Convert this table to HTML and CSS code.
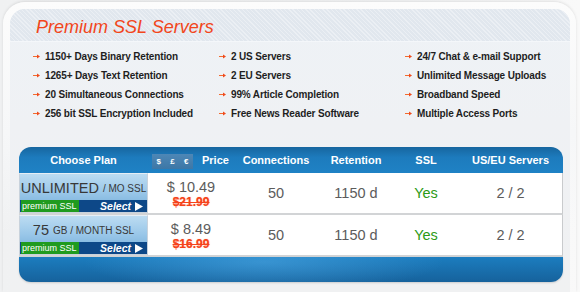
FILE: index.html
```html
<!DOCTYPE html>
<html>
<head>
<meta charset="utf-8">
<link rel="stylesheet" href="styles.css">
</head>
<body>
<div class="frame">
  <div class="panel">
    <div class="band"><h1 class="title">Premium SSL Servers</h1></div>
    <ul class="features">
      <li><span class="arr"><svg width="7" height="5" viewBox="0 0 7 5"><path d="M0 2.5H5" stroke="#f26a2e" stroke-width="1"/><path d="M4 0.5L7 2.5L4 4.5Z" fill="#f04a1c"/></svg></span>1150+ Days Binary Retention</li>
      <li><span class="arr"><svg width="7" height="5" viewBox="0 0 7 5"><path d="M0 2.5H5" stroke="#f26a2e" stroke-width="1"/><path d="M4 0.5L7 2.5L4 4.5Z" fill="#f04a1c"/></svg></span>2 US Servers</li>
      <li><span class="arr"><svg width="7" height="5" viewBox="0 0 7 5"><path d="M0 2.5H5" stroke="#f26a2e" stroke-width="1"/><path d="M4 0.5L7 2.5L4 4.5Z" fill="#f04a1c"/></svg></span>24/7 Chat &amp; e-mail Support</li>
      <li><span class="arr"><svg width="7" height="5" viewBox="0 0 7 5"><path d="M0 2.5H5" stroke="#f26a2e" stroke-width="1"/><path d="M4 0.5L7 2.5L4 4.5Z" fill="#f04a1c"/></svg></span>1265+ Days Text Retention</li>
      <li><span class="arr"><svg width="7" height="5" viewBox="0 0 7 5"><path d="M0 2.5H5" stroke="#f26a2e" stroke-width="1"/><path d="M4 0.5L7 2.5L4 4.5Z" fill="#f04a1c"/></svg></span>2 EU Servers</li>
      <li><span class="arr"><svg width="7" height="5" viewBox="0 0 7 5"><path d="M0 2.5H5" stroke="#f26a2e" stroke-width="1"/><path d="M4 0.5L7 2.5L4 4.5Z" fill="#f04a1c"/></svg></span>Unlimited Message Uploads</li>
      <li><span class="arr"><svg width="7" height="5" viewBox="0 0 7 5"><path d="M0 2.5H5" stroke="#f26a2e" stroke-width="1"/><path d="M4 0.5L7 2.5L4 4.5Z" fill="#f04a1c"/></svg></span>20 Simultaneous Connections</li>
      <li><span class="arr"><svg width="7" height="5" viewBox="0 0 7 5"><path d="M0 2.5H5" stroke="#f26a2e" stroke-width="1"/><path d="M4 0.5L7 2.5L4 4.5Z" fill="#f04a1c"/></svg></span>99% Article Completion</li>
      <li><span class="arr"><svg width="7" height="5" viewBox="0 0 7 5"><path d="M0 2.5H5" stroke="#f26a2e" stroke-width="1"/><path d="M4 0.5L7 2.5L4 4.5Z" fill="#f04a1c"/></svg></span>Broadband Speed</li>
      <li><span class="arr"><svg width="7" height="5" viewBox="0 0 7 5"><path d="M0 2.5H5" stroke="#f26a2e" stroke-width="1"/><path d="M4 0.5L7 2.5L4 4.5Z" fill="#f04a1c"/></svg></span>256 bit SSL Encryption Included</li>
      <li><span class="arr"><svg width="7" height="5" viewBox="0 0 7 5"><path d="M0 2.5H5" stroke="#f26a2e" stroke-width="1"/><path d="M4 0.5L7 2.5L4 4.5Z" fill="#f04a1c"/></svg></span>Free News Reader Software</li>
      <li><span class="arr"><svg width="7" height="5" viewBox="0 0 7 5"><path d="M0 2.5H5" stroke="#f26a2e" stroke-width="1"/><path d="M4 0.5L7 2.5L4 4.5Z" fill="#f04a1c"/></svg></span>Multiple Access Ports</li>
    </ul>

    <div class="plans">
      <div class="thead">
        <div class="th">Choose Plan</div>
        <div class="th th-price"><span class="cur"><span>$</span><span>£</span><span>€</span></span><span>Price</span></div>
        <div class="th">Connections</div>
        <div class="th">Retention</div>
        <div class="th">SSL</div>
        <div class="th">US/EU Servers</div>
      </div>

      <div class="row">
        <div class="plan">
          <div class="plan-name"><span class="big">UNLIMITED</span><span class="small">/ MO SSL</span></div>
          <div class="strip"><span class="badge">premium SSL</span><span class="select">Select <svg width="8" height="9" viewBox="0 0 8 9"><path d="M0 0L8 4.5L0 9Z" fill="#fff"/></svg></span></div>
        </div>
        <div class="td price"><span class="now">$ 10.49</span><span class="was">$21.99</span></div>
        <div class="td">50</div>
        <div class="td">1150 d</div>
        <div class="td yes">Yes</div>
        <div class="td">2 / 2</div>
      </div>

      <div class="row">
        <div class="plan">
          <div class="plan-name"><span class="big">75</span><span class="small">GB / MONTH SSL</span></div>
          <div class="strip"><span class="badge">premium SSL</span><span class="select">Select <svg width="8" height="9" viewBox="0 0 8 9"><path d="M0 0L8 4.5L0 9Z" fill="#fff"/></svg></span></div>
        </div>
        <div class="td price"><span class="now">$ 8.49</span><span class="was">$16.99</span></div>
        <div class="td">50</div>
        <div class="td">1150 d</div>
        <div class="td yes">Yes</div>
        <div class="td">2 / 2</div>
      </div>

      <div class="tfoot"></div>
    </div>
  </div>
</div>
</body>
</html>
```

FILE: styles.css
```css
html, body {
  margin: 0;
  padding: 0;
}
body {
  width: 580px;
  height: 292px;
  overflow: hidden;
  background: linear-gradient(to right, #f0f1f2, #f4f5f6 70%, #f9f9f9);
  font-family: "Liberation Sans", Arial, sans-serif;
}
.frame {
  margin: 2px 4px 0 3px;
  height: 290px;
  box-sizing: border-box;
  padding: 7px 6px 0 7px;
  border-radius: 22px 22px 0 0;
  background: linear-gradient(#fcfcfc, #f6f7f8 45%, rgba(246,247,248,0) 80%);
  box-shadow: 0 -1px 3px rgba(0,0,0,0.10);
}
.panel {
  height: 100%;
  border-radius: 15px 15px 0 0;
  background: linear-gradient(#eef2f6, #eff1f4 40%, #f0f1f2 100%);
}
.band {
  height: 33px;
  box-sizing: border-box;
  padding: 8px 0 0 26px;
  border-radius: 15px 15px 0 0;
  background:
    repeating-linear-gradient(45deg, rgba(255,255,255,0.35) 0 1px, rgba(255,255,255,0) 1px 3px),
    #e1e7ee;
  border-bottom: 1px solid #f4f7fa;
}
.title {
  margin: 0;
  font-size: 18px;
  line-height: 20px;
  font-style: italic;
  font-weight: normal;
  color: #f2461b;
}
.features {
  list-style: none;
  margin: 0;
  padding: 5px 0 0 23px;
  display: grid;
  grid-template-columns: 186px 186px 186px;
  grid-auto-rows: 19px;
}
.features li {
  display: flex;
  align-items: center;
  font-size: 10px;
  font-weight: bold;
  letter-spacing: -0.15px;
  color: #1e1e1e;
}
.arr {
  display: flex;
  width: 12px;
  flex: none;
}
.plans {
  margin: 24px 0 0 9px;
  width: 544px;
}
.thead, .row {
  display: grid;
  grid-template-columns: 129px 86px 84px 76px 64px 105px;
}
.thead {
  height: 26px;
  border-radius: 12px 12px 0 0;
  background: linear-gradient(#17669f, #1d7bbd 40%, #1f82c5);
}
.th {
  display: flex;
  align-items: center;
  justify-content: center;
  color: #fff;
  font-size: 11px;
  font-weight: bold;
}
.th-price {
  justify-content: flex-start;
  padding-left: 4px;
  gap: 9px;
}
.cur {
  display: flex;
  align-items: center;
  justify-content: space-around;
  width: 41px;
  height: 15px;
  margin-top: 2px;
  background: linear-gradient(#4d87b6, #3d77a6);
  font-size: 8px;
  font-weight: bold;
}
.row {
  height: 42px;
  box-sizing: border-box;
  background: #fff;
  border-bottom: 2px solid #d2d4d6;
  border-right: 1px solid #c9cbcd;
}
.row:last-of-type {
  height: 40px;
  border-bottom: 0;
}
.plan {
  display: flex;
  flex-direction: column;
  border: 1px solid #c8d2dc;
  border-top-color: #e6eef5;
  background: linear-gradient(#bcdcf2, #98c6e8 50%, #72abd8);
}
.plan-name {
  flex: 1;
  display: flex;
  align-items: center;
  justify-content: center;
  gap: 4px;
  color: #383838;
  padding-top: 1px;
}
.big {
  font-size: 14.5px;
}
.small {
  font-size: 10px;
  margin-top: 2px;
}
.row:last-of-type .small {
  font-size: 9.6px;
}
.strip {
  height: 12px;
  display: flex;
  align-items: center;
  justify-content: space-between;
  background: #0d4888;
  padding-left: 1px;
  padding-right: 4px;
}
.badge {
  height: 12px;
  line-height: 12px;
  background: #1f9b1f;
  color: #fff;
  font-size: 9px;
  padding: 0 2px 0 1px;
}
.select {
  display: flex;
  align-items: center;
  gap: 4px;
  color: #fff;
  font-size: 10.5px;
  font-weight: bold;
  font-style: italic;
}
.td {
  display: flex;
  align-items: center;
  justify-content: center;
  font-size: 14.5px;
  color: #5c5c5c;
}
.price {
  flex-direction: column;
  padding-top: 2px;
}
.now {
  line-height: 15px;
}
.was {
  font-size: 12px;
  line-height: 14px;
  font-weight: bold;
  color: #f5431b;
  text-decoration: line-through;
  text-shadow: 0 0 1px rgba(255,90,40,0.6);
}
.yes {
  color: #2c9a16;
}
.tfoot {
  height: 25px;
  border-radius: 0 0 12px 12px;
  background:
    radial-gradient(ellipse 180px 30px at 45% 20%, rgba(80,170,230,0.55), rgba(80,170,230,0)),
    linear-gradient(#1c7dbf, #16629c);
  box-shadow: 0 1px 2px rgba(0,0,0,0.15);
}
```
